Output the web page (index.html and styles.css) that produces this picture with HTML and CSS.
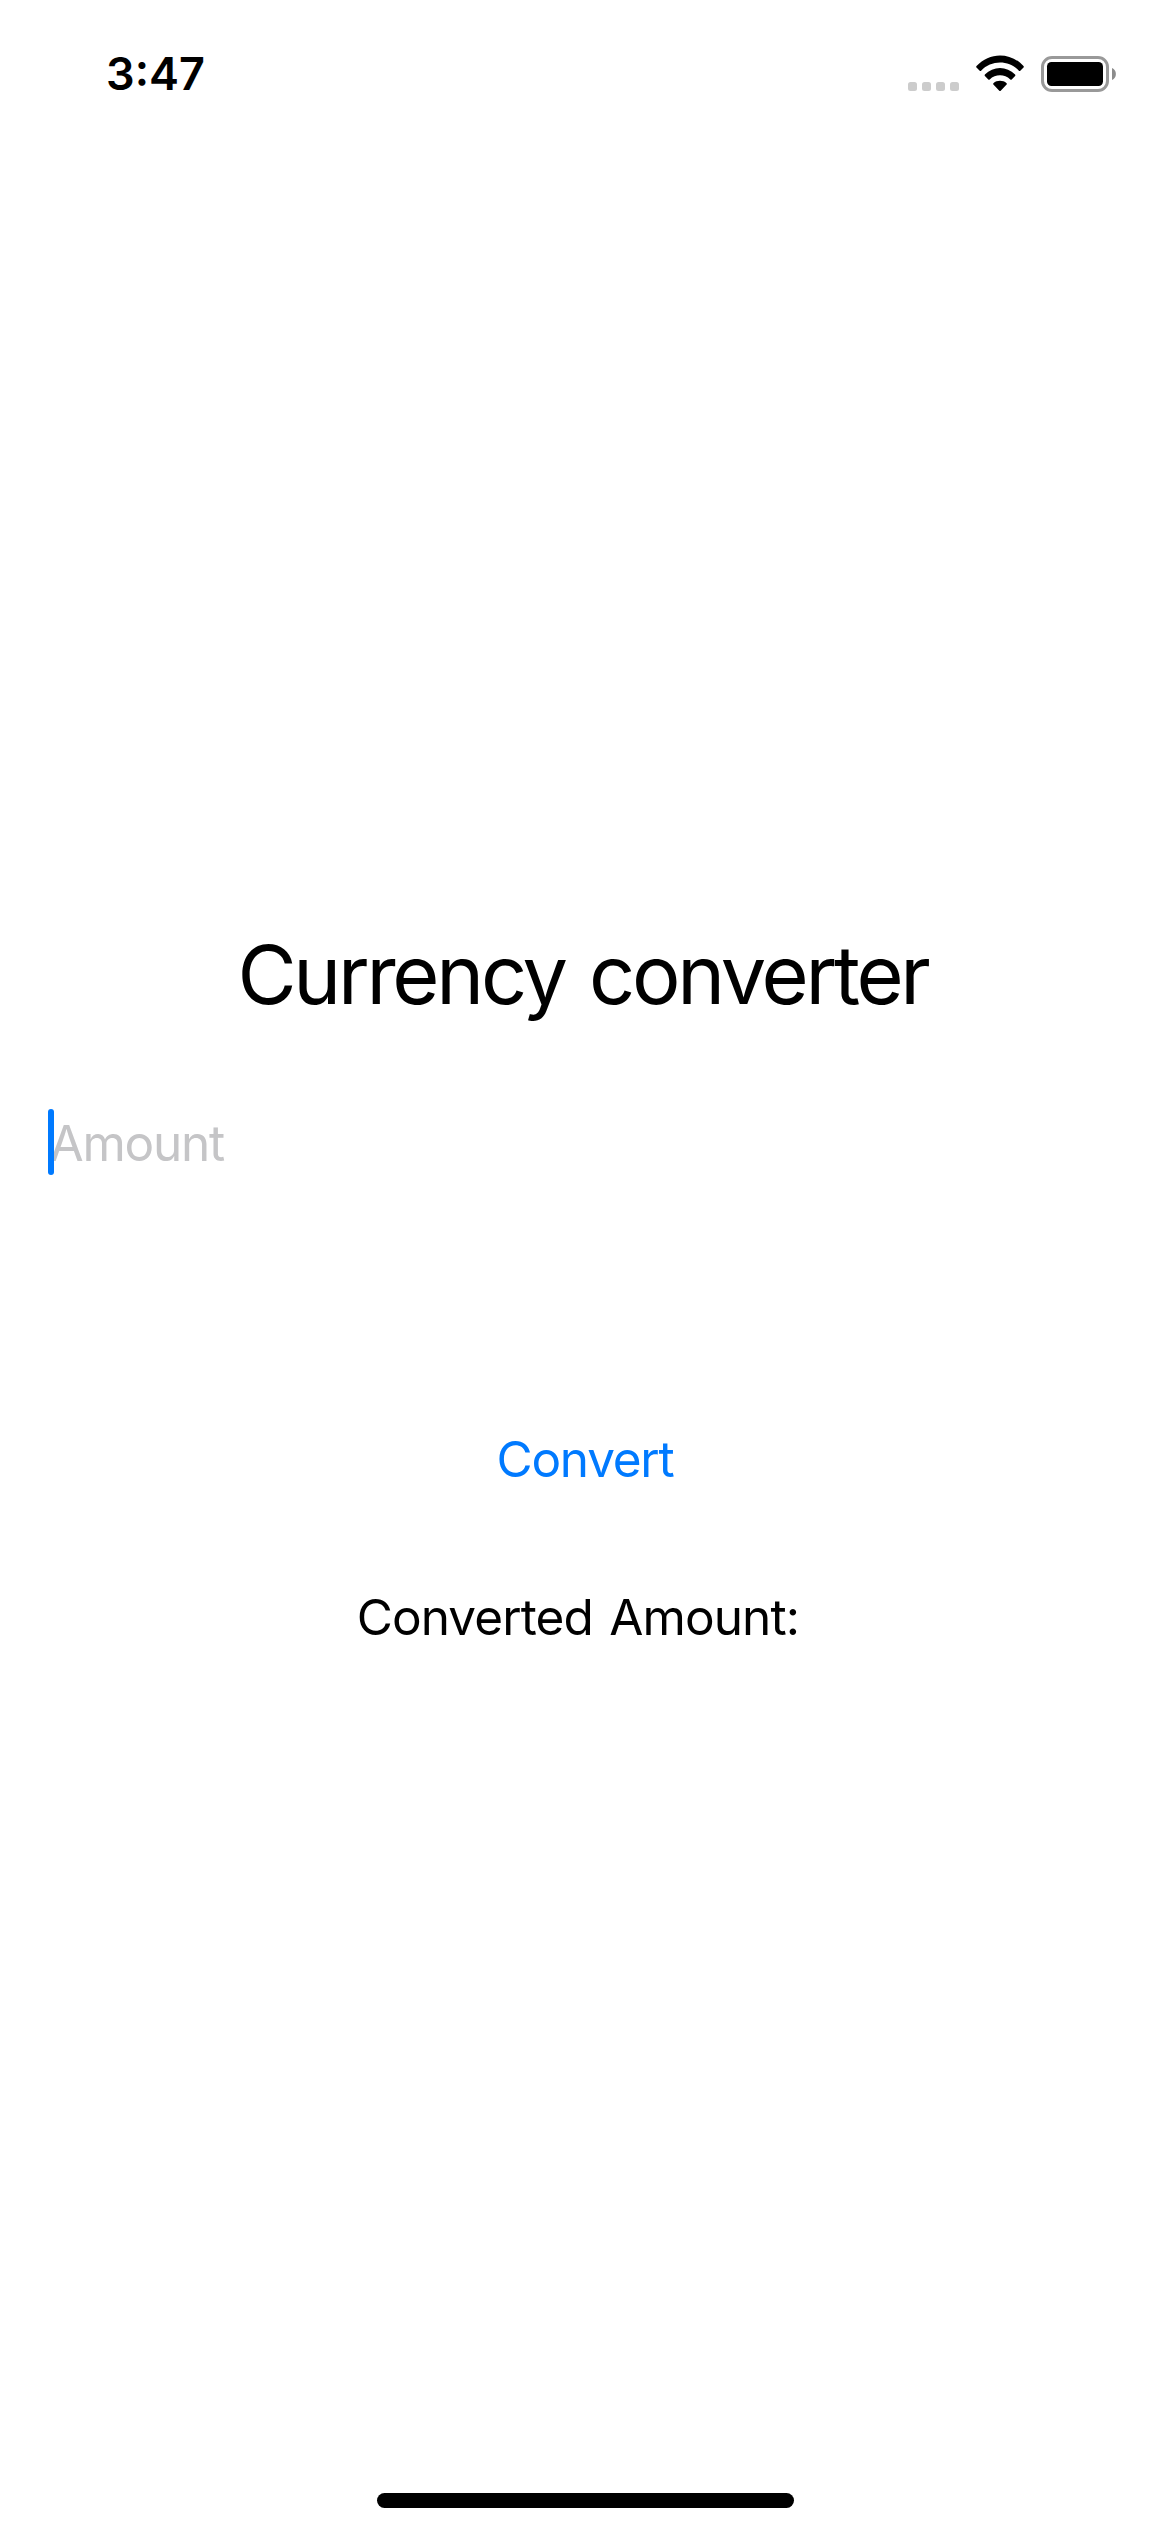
FILE: index.html
```html
<!DOCTYPE html>
<html lang="en">
<head>
<meta charset="utf-8">
<title>Currency converter</title>
<link rel="stylesheet" href="styles.css">
</head>
<body>
<div class="screen">
  <header class="status-bar">
    <span class="time">3:47</span>
    <div class="indicators">
      <svg class="signal" width="51" height="9" viewBox="0 0 51 9" fill="#ccc">
        <rect width="9" height="9" rx="2.5"/><rect x="14" width="9" height="9" rx="2.5"/><rect x="28" width="9" height="9" rx="2.5"/><rect x="42" width="9" height="9" rx="2.5"/>
      </svg>
      <svg class="wifi" width="50" height="37" viewBox="0 0 50 37">
        <path d="M1.5 11.1C14.3-3.2 35.7-3.2 48.5 11.1Q49.2 11.9 48.5 12.6L45.3 15.7Q44.6 16.4 43.9 15.7C33.6 4.9 16.4 4.9 6.1 15.7Q5.4 16.4 4.7 15.7L1.5 12.6Q.8 11.9 1.5 11.1Z"/>
        <path d="M9.9 19.6C18.2 10.9 31.8 10.9 40.1 19.6Q40.8 20.3 40.1 21L36.7 24.4Q36 25.1 35.3 24.4C29.6 19 20.4 19 14.7 24.4Q14 25.1 13.3 24.4L9.9 21Q9.2 20.3 9.9 19.6Z"/>
        <path d="M18.4 28.2C22.1 25 27.9 25 31.6 28.2Q32.3 28.9 31.6 29.6L25.7 35.7Q25 36.4 24.3 35.7L18.4 29.6Q17.7 28.9 18.4 28.2Z"/>
      </svg>
      <svg class="battery" width="75" height="36" viewBox="0 0 75 36">
        <rect x="1.5" y="1.5" width="65" height="33" rx="9.5" fill="none" stroke="#999" stroke-width="3"/>
        <rect x="6" y="6" width="56" height="24" rx="4.5"/>
        <path d="M71 12C76.2 13.8 76.2 22.2 71 24Z" fill="#8c8c8c"/>
      </svg>
    </div>
  </header>
  <main class="converter">
    <h1 class="title">Currency converter</h1>
    <div class="field"><span class="caret"></span><span class="placeholder">Amount</span></div>
    <button class="convert">Convert</button>
    <p class="result">Converted Amount: </p>
  </main>
  <footer class="home"><span class="home-indicator"></span></footer>
</div>
</body>
</html>
```
FILE: styles.css
```css
* { box-sizing: border-box; }
body { margin: 0; background: #fff; color: #000; font-family: Inter, "Liberation Sans", sans-serif; }
.screen { display: flex; flex-direction: column; width: 1170px; height: 2532px; }
.status-bar { display: flex; justify-content: space-between; height: 141px; padding: 46px 54px 0 106px; }
.time { font-size: 45px; line-height: 56px; font-weight: 600; }
.indicators { display: flex; align-items: flex-start; }
.signal { margin-top: 36px; }
.wifi { margin: 9px 16px 0; }
.battery { margin-top: 10px; }
.converter { display: flex; flex: 1; flex-direction: column; align-items: center; padding-top: 785px; }
.title { margin: 0; padding-right: 5px; font-size: 81px; line-height: 98px; font-weight: 400; letter-spacing: -3.25px; word-spacing: 4.8px; white-space: nowrap; }
.field { display: flex; align-items: center; align-self: stretch; height: 66px; margin: 85px 48px 0; }
.caret { z-index: 1; flex: none; width: 6px; height: 66px; border-radius: 3px; background: #007aff; }
.placeholder { margin-left: -4.5px; padding-top: 2px; font-size: 49.5px; line-height: 60px; letter-spacing: -1.25px; color: #c5c5c7; }
.convert { margin-top: 254px; padding: 0; border: 0; background: none; color: #007aff; font: inherit; font-size: 49.5px; line-height: 60px; letter-spacing: -1.25px; }
.result { margin: 98px 0 0; padding-left: 2px; font-size: 49.5px; line-height: 60px; letter-spacing: -0.9px; word-spacing: 3.2px; white-space: pre; }
.home { display: flex; justify-content: center; align-items: flex-start; height: 39px; padding-left: 1px; }
.home-indicator { width: 417px; height: 15px; border-radius: 8px; background: #000; }
```
